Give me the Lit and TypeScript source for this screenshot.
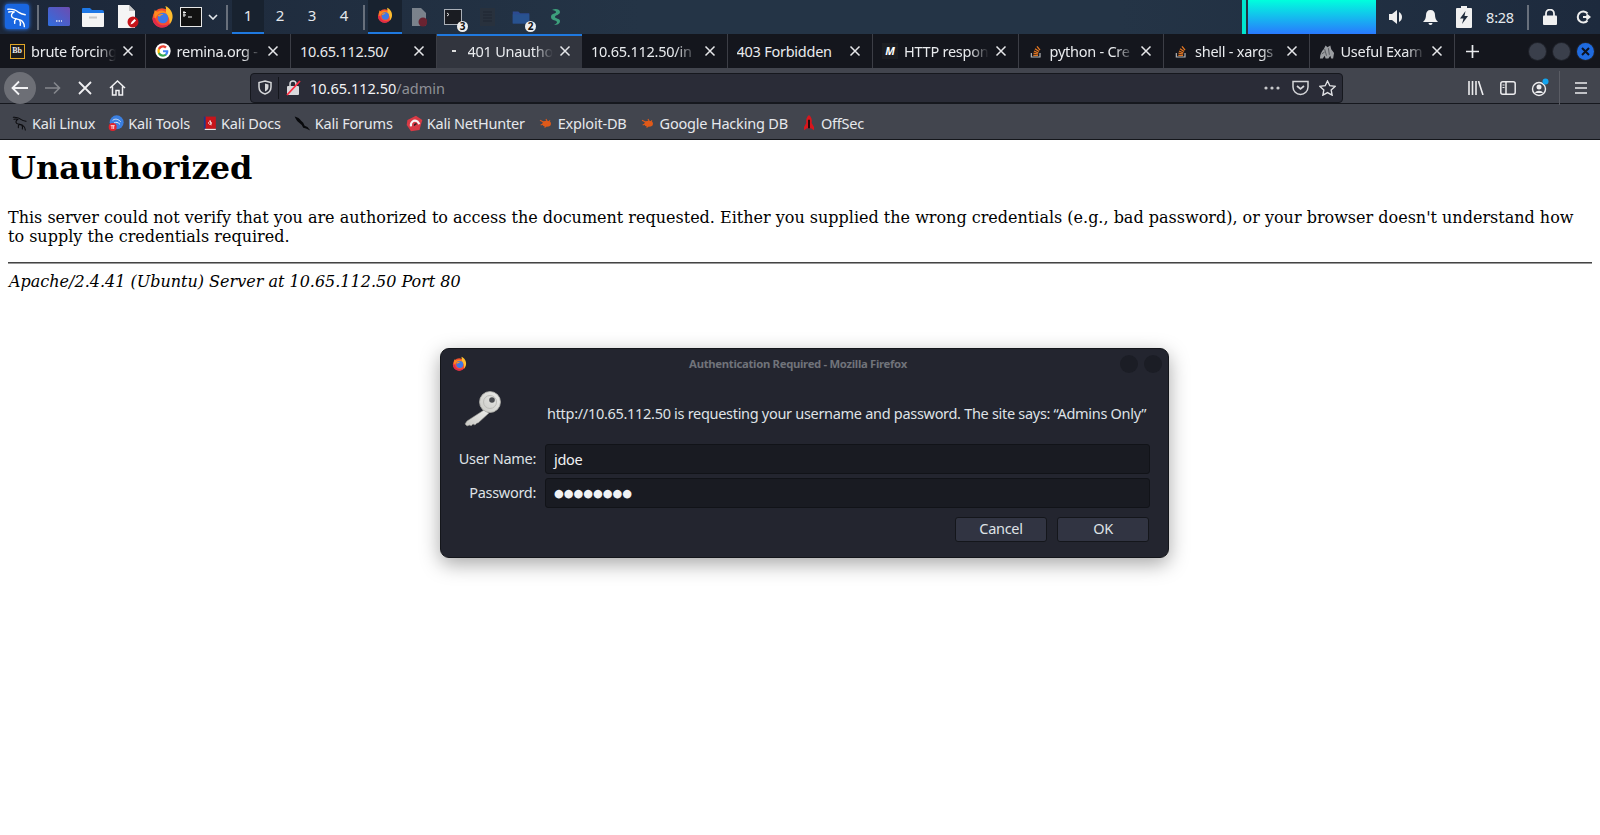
import { LitElement, html, css, svg } from "lit";
import { customElement } from "lit/decorators.js";

const icon = (size: number, body: unknown, box = 24) => html`<svg
  width=${size}
  height=${size}
  viewBox="0 0 ${box} ${box}"
>
  ${body}
</svg>`;

const firefox = (size: number) =>
  icon(
    size,
    svg`<circle cx="11.500" cy="13.500" r="10" fill="#f5502f"/>
    <path d="M15 1c5 2 8 7 7.500 12-.3 3-1.500 5.500-3.500 7.500 1-4 0-9-4-12 1-2 1-5 0-7.500z" fill="#ffbd2e"/>
    <path d="M4 5c1 1.500 2 2 3 2 1.500-1 3.500-1.500 5.500-1 2 .5 4 2 5 4-3-2-7-2-9.500-.5C6 11 5 13 4.500 15 3 12 3 8 4 5z" fill="#ff8a1f"/>
    <path d="M1.500 13.500c0 5.500 4.500 10 10 10 4 0 7.500-2 9-5.500-2 2.500-5 3.500-8.500 3-4-.5-7-3.500-7.500-7.500z" fill="#e02a4a"/>
    <circle cx="12.500" cy="13.500" r="5.500" fill="#3f78e8"/>
    <path d="M7 11c2-1.500 4-2 6-1.500-1 1-2 1.500-3 1.500 0 1-1.500 1.500-3 0z" fill="#ff9a1f"/>`
  );

const dragon = (size: number, color: string, w = 1.4) =>
  icon(
    size,
    svg`<g fill="none" stroke=${color} stroke-width=${w} stroke-linecap="round" stroke-linejoin="round">
      <path d="M2 3.500C7 3 11 4.500 14 7c2 1.500 4 2 7 2.500"/>
      <path d="M3 6.500c2-.5 4-.5 6 0-3 1.500-4 4-2 6 2 1.500 6 1.500 9 3 2.500 1.500 4 4 4 7"/>
      <path d="M11 14c-1.500 1.500-2 3-1.500 5"/>
      <path d="M15 16c1 1.500 1 3 .5 5"/>
    </g>`
  );

const google = icon(
  16,
  svg`<circle cx="12" cy="12" r="11.500" fill="#fff"/>
  <path d="M20 12.400c0-.6 0-1.200-.2-1.700H12v3.200h4.500c-.2 1-.8 1.900-1.700 2.500v2.100h2.700c1.600-1.500 2.500-3.600 2.500-6.100z" fill="#4285f4"/>
  <path d="M12 20.500c2.300 0 4.200-.8 5.500-2l-2.700-2.100c-.7.5-1.700.8-2.800.8-2.200 0-4-1.500-4.700-3.400H4.500v2.200c1.400 2.700 4.200 4.500 7.500 4.500z" fill="#34a853"/>
  <path d="M7.300 13.800c-.4-1.100-.4-2.400 0-3.600V8H4.500c-1.100 2.400-1.100 5.200 0 8z" fill="#fbbc05"/>
  <path d="M12 6.800c1.200 0 2.300.4 3.200 1.300l2.400-2.400C16.100 4.300 14.200 3.500 12 3.500 8.700 3.500 5.900 5.300 4.500 8l2.800 2.200C8 8.300 9.800 6.800 12 6.800z" fill="#ea4335"/>`
);

const stack = icon(
  18,
  svg`<path d="M5 15v6h13v-6" fill="none" stroke="#b3b5b8" stroke-width="1.800"/>
  <g stroke="#e87922" stroke-width="1.900" fill="none">
    <path d="M8 18.500h7"/><path d="M8.200 15.300l7 1.200"/><path d="M9 12l6.500 3"/><path d="M10.500 8.500l6 4.300"/><path d="M13.500 5l4.500 5.800"/>
  </g>`
);

const closeX = html`<svg class="x" width="12" height="12" viewBox="0 0 12 12">
  <path d="M1.500 1.500l9 9M10.500 1.500l-9 9" stroke="#e6e7ea" stroke-width="1.500" />
</svg>`;

const taskFolder = icon(
  22,
  svg`<path d="M3 6h6l2 2h10v11H3z" fill="#2c4a90"/><path d="M3 9h18v10H3z" fill="#28528f"/>`
);

@customElement("top-panel")
class TopPanel extends LitElement {
  static styles = css`
    :host {
      display: grid;
      grid-template-columns:
        34px 8px 34px 34px 36px 32px 26px 18px 10px 32px 32px 32px 32px 8px repeat(6, 34px)
        1fr 4px 2px 128px 4px 34px 33px 34px 42px 10px 33px 34px;
      height: 34px;
      background: linear-gradient(90deg, #1c2739, #243446 40%, #243446 70%, #1d2a3d);
      color: #e4e8ec;
      font: 15px "Noto Sans", sans-serif;
      letter-spacing: -0.25px;
    }
    .cell {
      display: flex;
      align-items: center;
      justify-content: center;
      position: relative;
      height: 33px;
    }
    .sep {
      display: flex;
      justify-content: center;
      padding-top: 5px;
    }
    .sep i {
      display: block;
      width: 2px;
      height: 25px;
      background: #68707c;
    }
    .logo {
      width: 24px;
      height: 25px;
      border-radius: 3px;
      background: #1966e0;
      box-shadow: 0 0 4px #2b7cff;
      display: flex;
      align-items: center;
      justify-content: center;
    }
    .ws {
      box-sizing: border-box;
      height: 34px;
      border-bottom: 2px solid transparent;
      padding-bottom: 2px;
    }
    .ws.on {
      background: #18222f;
      border-bottom-color: #1f79e0;
    }
    .badge {
      position: absolute;
      right: 2px;
      bottom: 1px;
      width: 11px;
      height: 11px;
      border-radius: 50%;
      background: #eee;
      color: #111;
      font: bold 10px/11px "Noto Sans", sans-serif;
      text-align: center;
    }
    .dim {
      opacity: 0.55;
    }
    .vis1 {
      background: #00e6cf;
    }
    .vis2 {
      background: linear-gradient(180deg, #00ffdd, #2979ff);
    }
    .time {
      font-size: 14.500px;
      padding-right: 4px;
      box-sizing: border-box;
    }
  `;

  render() {
    return html`
      <div class="cell">
        <div class="logo">${dragon(22, "#fff", 1.5)}</div>
      </div>
      <div class="sep"><i></i></div>
      <div class="cell">
        <svg width="22" height="19" viewBox="0 0 22 19">
          <defs>
            <linearGradient id="lg" x1="0" x2="1" y1="1" y2="0">
              <stop offset="0" stop-color="#2f6fe0" />
              <stop offset="1" stop-color="#6d4cb0" />
            </linearGradient>
          </defs>
          <rect width="22" height="19" rx="1.500" fill="url(#lg)" />
          <path d="M8 14h6" stroke="#dfe6f5" stroke-width="1.500" stroke-dasharray="1.500 1" />
        </svg>
      </div>
      <div class="cell">
        <svg width="22" height="20" viewBox="0 0 22 20">
          <path d="M0 2a1 1 0 011-1h7l2 2h10a2 2 0 012 2v3H0z" fill="#1e78e6" />
          <path d="M0 6h22v13a1 1 0 01-1 1H1a1 1 0 01-1-1z" fill="#f4f4f4" />
          <path d="M7 9.500h8v2H7z" fill="#c9c9c9" />
        </svg>
      </div>
      <div class="cell">
        <svg width="22" height="23" viewBox="0 0 22 23">
          <path d="M1 0h11l6 6v17H1z" fill="#f5f5f5" />
          <path d="M12 0l6 6h-6z" fill="#c8c8c8" />
          <circle cx="16" cy="17" r="5.500" fill="#c7141a" />
          <path d="M13.500 19.500l1-2.500 3-3 1.500 1.500-3 3z" fill="#fff" />
        </svg>
      </div>
      <div class="cell">${firefox(23)}</div>
      <div class="cell">
        <svg width="22" height="20" viewBox="0 0 22 20">
          <rect x=".5" y=".5" width="21" height="19" fill="#111" stroke="#e8e8e8" />
          <path d="M4 4v6M3 5.500h3M3 8h3M8 10h4" stroke="#eee" stroke-width="1" fill="none" />
        </svg>
      </div>
      <div class="cell">
        <svg width="10" height="6" viewBox="0 0 10 6">
          <path d="M1 1l4 4 4-4" stroke="#e4e8ec" stroke-width="1.600" fill="none" />
        </svg>
      </div>
      <div class="sep"><i></i></div>
      <div class="cell ws on">1</div>
      <div class="cell ws">2</div>
      <div class="cell ws">3</div>
      <div class="cell ws">4</div>
      <div class="sep"><i></i></div>
      <div class="cell ws on">${firefox(16)}</div>
      <div class="cell">
        <svg class="dim" width="16" height="20" viewBox="0 0 16 20">
          <path d="M1 1h9l5 5v13H1z" fill="#c4c6c9" />
          <circle cx="12" cy="15" r="4.500" fill="#a51a24" />
        </svg>
      </div>
      <div class="cell">
        <svg width="18" height="16" viewBox="0 0 18 16">
          <rect x=".5" y=".5" width="17" height="15" fill="#1a1c22" stroke="#aab0b8" />
          <path d="M3 4l2 1.500L3 7" stroke="#ddd" fill="none" />
        </svg>
        <span class="badge">3</span>
      </div>
      <div class="cell">
        <svg width="15" height="18" viewBox="0 0 15 18">
          <rect width="15" height="18" fill="#28313d" />
          <path d="M3 4h9M3 7h9M3 10h9M3 13h9" stroke="#1e2632" />
        </svg>
      </div>
      <div class="cell">${taskFolder}<span class="badge">2</span></div>
      <div class="cell">
        <svg width="14" height="18" viewBox="0 0 14 18">
          <path
            d="M4 2c3-2 8-1 8 2s-5 3-5 5 5 1 5 4-3 4-6 4c2-1 3-2 3-3 0-2-6-1-6-5s5-3 5-5c0-1-2-2-4-2z"
            fill="#3d9f7c"
          />
        </svg>
      </div>
      <div></div>
      <div class="vis1"></div>
      <div></div>
      <div class="vis2"></div>
      <div></div>
      <div class="cell">
        <svg width="16" height="16" viewBox="0 0 16 16">
          <path d="M0 5h3l5-4v14l-5-4H0z" fill="#eee" />
          <path d="M10 3c4 2 4 8 0 10z" fill="#eee" />
        </svg>
      </div>
      <div class="cell">
        <svg width="15" height="16" viewBox="0 0 15 16">
          <path d="M7.500 1c3 0 4.500 2 4.500 5s1 5 3 7H0c2-2 3-4 3-7s1.500-5 4.500-5z" fill="#f2f2f2" />
          <path d="M5.500 14h4a2 2 0 01-4 0z" fill="#f2f2f2" />
        </svg>
      </div>
      <div class="cell">
        <svg width="16" height="22" viewBox="0 0 16 22">
          <path d="M5 0h6v2h4a1 1 0 011 1v18a1 1 0 01-1 1H1a1 1 0 01-1-1V3a1 1 0 011-1h4z" fill="#f0f0f0" />
          <path d="M9.500 5L4 12.500h3.500L6 18l6-8H8.500z" fill="#1e2a3a" />
        </svg>
      </div>
      <div class="cell time">8:28</div>
      <div class="sep"><i></i></div>
      <div class="cell">
        <svg width="14" height="16" viewBox="0 0 14 16">
          <path d="M3 7V4.500a4 4 0 018 0V7" fill="none" stroke="#f0f0f0" stroke-width="1.800" />
          <rect y="6.500" width="14" height="9.500" rx="1" fill="#f0f0f0" />
        </svg>
      </div>
      <div class="cell">
        <svg width="15" height="14" viewBox="0 0 15 14">
          <path d="M11.500 3.500A5.500 5.500 0 1011.500 10.500" fill="none" stroke="#eee" stroke-width="2" />
          <path d="M7 7h6.500M10.500 4.500L13.500 7l-3 2.500" fill="none" stroke="#eee" stroke-width="2" />
        </svg>
      </div>
    `;
  }
}

@customElement("tab-strip")
class TabStrip extends LitElement {
  static styles = css`
    :host {
      display: flex;
      height: 34px;
      background: #14161d;
      color: #e9ebee;
      font: 14.500px "Noto Sans", sans-serif;
      letter-spacing: -0.25px;
      box-sizing: border-box;
    }
    .tab {
      width: 145.500px;
      flex: none;
      box-sizing: border-box;
      display: flex;
      align-items: center;
      gap: 6px;
      padding: 0 11px 0 9px;
      border-right: 1px solid #3c3e46;
    }
    .tab.on {
      background: #32353e;
      border-top: 2px solid #1f79e0;
      border-right: none;
      padding-bottom: 2px;
    }
    .title {
      flex: 1;
      min-width: 0;
      overflow: hidden;
      white-space: nowrap;
      padding-bottom: 1px;
      -webkit-mask-image: linear-gradient(90deg, #000 78%, transparent);
      mask-image: linear-gradient(90deg, #000 78%, transparent);
    }
    .title.full {
      -webkit-mask-image: none;
      mask-image: none;
    }
    .fav {
      width: 16px;
      height: 16px;
      flex: none;
      display: flex;
      align-items: center;
      justify-content: center;
    }
    .bb {
      box-sizing: border-box;
      width: 15px;
      height: 15px;
      border: 1.500px solid #e0a526;
      background: #1a1a1a;
      color: #eee;
      font: bold 8px/12px "Liberation Serif", serif;
      text-align: center;
    }
    .mm {
      background: #1c1e22;
      color: #fff;
      font: italic bold 11px/16px "Noto Sans", sans-serif;
      text-align: center;
    }
    .dot {
      width: 4px;
      height: 2px;
      background: #ddd;
    }
    .x {
      flex: none;
    }
    .plus {
      width: 34px;
      display: flex;
      align-items: center;
      justify-content: center;
    }
    .spacer {
      flex: 1;
    }
    .wins {
      display: flex;
      align-items: center;
      gap: 7px;
      padding-right: 6px;
    }
    .win {
      width: 17px;
      height: 17px;
      border-radius: 50%;
      background: #3a3f4b;
      box-shadow: 0 0 0 1px #20232b;
      display: flex;
      align-items: center;
      justify-content: center;
    }
    .win.close {
      background: #1f6be0;
    }
  `;

  render() {
    const tab = (fav: unknown, title: string, on = false, full = false) => html`
      <div class="tab ${on ? "on" : ""}">
        ${fav ? html`<div class="fav">${fav}</div>` : ""}
        <div class="title ${full ? "full" : ""}">${title}</div>
        ${closeX}
      </div>
    `;
    return html`
      ${tab(html`<div class="bb">Bb</div>`, "brute forcing")}
      ${tab(google, "remina.org -")}
      ${tab(null, "10.65.112.50/", false, true)}
      ${tab(html`<div class="dot"></div>`, "401 Unautho", true)}
      ${tab(null, "10.65.112.50/in")}
      ${tab(null, "403 Forbidden", false, true)}
      ${tab(html`<div class="fav mm">M</div>`, "HTTP respon")}
      ${tab(stack, "python - Cre")}
      ${tab(stack, "shell - xargs")}
      ${tab(
        html`<svg width="17" height="17" viewBox="0 0 17 17">
          <path d="M1 16c0-5 2-8 4-10l2-4 2 2 3-2 1 4 3 4-1 6h-2l-1-3-2 3H7l-1-3-2 3z" fill="#9a9da1" />
          <path d="M6 6l2 7M10 5l1 7M3 11l3-2" stroke="#55585c" />
        </svg>`,
        "Useful Exam"
      )}
      <div class="plus">
        <svg width="15" height="15" viewBox="0 0 15 15">
          <path d="M7.500 1v13M1 7.500h13" stroke="#e9ebee" stroke-width="1.700" />
        </svg>
      </div>
      <div class="spacer"></div>
      <div class="wins">
        <div class="win"></div>
        <div class="win"></div>
        <div class="win close">
          <svg width="9" height="9" viewBox="0 0 9 9">
            <path d="M1 1l7 7M8 1l-7 7" stroke="#0c1220" stroke-width="2" />
          </svg>
        </div>
      </div>
    `;
  }
}

@customElement("nav-bar")
class NavBar extends LitElement {
  static styles = css`
    :host {
      display: flex;
      align-items: center;
      height: 36px;
      background: #42454e;
      border-bottom: 1px solid #16181e;
      box-sizing: border-box;
      padding: 4px 0 0 4px;
      color: #f0f0f2;
    }
    .btn {
      width: 32px;
      height: 32px;
      flex: none;
      display: flex;
      align-items: center;
      justify-content: center;
    }
    .back {
      border-radius: 50%;
      background: #6d6f76;
      margin-right: 1px;
    }
    .nav-group {
      display: grid;
      grid-template-columns: 32px 32px 32px;
      margin-right: 117px;
    }
    .url {
      width: 1093px;
      height: 30px;
      flex: none;
      box-sizing: border-box;
      background: #2a2c37;
      border: 1px solid #16181e;
      border-radius: 4px;
      display: flex;
      align-items: center;
      padding: 0 6px 0 7px;
      font: 14.500px "Noto Sans", sans-serif;
    }
    .divider {
      width: 1px;
      height: 22px;
      background: #14161c;
      margin: 0 7px 0 6px;
    }
    .host {
      color: #f3f4f6;
      margin-left: 9px;
    }
    .path {
      color: #8e9096;
      flex: 1;
    }
    .right-icons {
      display: flex;
      align-items: center;
      gap: 10px;
    }
    .tools {
      display: flex;
      align-items: center;
      margin-left: auto;
      height: 34px;
      padding-right: 3px;
    }
    .vsep {
      width: 1px;
      height: 34px;
      background: #5a5c64;
      margin: 0 5px 0 3px;
    }
  `;

  render() {
    return html`
      <div class="btn back">
        <svg width="18" height="16" viewBox="0 0 18 16">
          <path d="M17 8H2M8 1.500L1.500 8 8 14.500" fill="none" stroke="#f2f2f4" stroke-width="1.800" />
        </svg>
      </div>
      <div class="nav-group">
        <div class="btn">
          <svg width="16" height="14" viewBox="0 0 16 14">
            <path d="M0 7h14M9 1.500L14.500 7 9 12.500" fill="none" stroke="#85878d" stroke-width="1.600" />
          </svg>
        </div>
        <div class="btn">
          <svg width="14" height="14" viewBox="0 0 14 14">
            <path d="M1 1l12 12M13 1L1 13" stroke="#f0f0f2" stroke-width="1.800" />
          </svg>
        </div>
        <div class="btn">
          <svg width="17" height="16" viewBox="0 0 17 16">
            <path
              d="M1 8l7.500-7L16 8M3.500 6.500V15h3.500v-4.500h3V15h3.500V6.500"
              fill="none"
              stroke="#f0f0f2"
              stroke-width="1.500"
            />
          </svg>
        </div>
      </div>
      <div class="url">
        <svg width="14" height="15" viewBox="0 0 14 15">
          <path
            d="M7 1l6 1.500V7c0 3.500-2.500 6-6 7-3.500-1-6-3.500-6-7V2.500z"
            fill="none"
            stroke="#d5d6d9"
            stroke-width="1.500"
          />
          <path d="M7 3.500l3.500 1V7c0 2-1.500 3.500-3.500 4.500z" fill="#d5d6d9" />
        </svg>
        <div class="divider"></div>
        <svg width="15" height="16" viewBox="0 0 15 16">
          <rect x="1" y="6" width="12" height="9" rx="1" fill="#d9d9dc" />
          <path d="M4 6V4a3 3 0 016 0v2" fill="none" stroke="#d9d9dc" stroke-width="1.500" />
          <path d="M1 15L14 1" stroke="#ff2a3f" stroke-width="1.800" />
        </svg>
        <span class="host">10.65.112.50</span><span class="path">/admin</span>
        <div class="right-icons">
          <svg width="20" height="16" viewBox="0 0 20 16">
            <circle cx="4" cy="8" r="1.600" fill="#c8c9cc" />
            <circle cx="10" cy="8" r="1.600" fill="#c8c9cc" />
            <circle cx="16" cy="8" r="1.600" fill="#c8c9cc" />
          </svg>
          <svg width="17" height="16" viewBox="0 0 17 16">
            <path d="M1 1.500h15V7a7.500 7.500 0 01-15 0z" fill="none" stroke="#d5d6d9" stroke-width="1.500" />
            <path d="M5 6l3.500 3L12 6" fill="none" stroke="#d5d6d9" stroke-width="1.700" />
          </svg>
          <svg width="17" height="16" viewBox="0 0 17 16">
            <path
              d="M8.500 1l2.300 4.700 5.200.7-3.800 3.600.9 5.100-4.600-2.500-4.600 2.500.9-5.100L1 6.400l5.200-.7z"
              fill="none"
              stroke="#e0e1e4"
              stroke-width="1.400"
            />
          </svg>
        </div>
      </div>
      <div class="tools">
        <div class="btn">
          <svg width="16" height="14" viewBox="0 0 16 14">
            <path d="M1 0v14M4.500 0v14M8 0v14M10.500 0l4.500 14" stroke="#ececee" stroke-width="1.600" fill="none" />
          </svg>
        </div>
        <div class="btn">
          <svg width="16" height="14" viewBox="0 0 16 14">
            <rect x=".8" y=".8" width="14.400" height="12.400" rx="2" fill="none" stroke="#ececee" stroke-width="1.500" />
            <path d="M6 1v12" stroke="#ececee" stroke-width="1.500" />
            <path d="M2.500 4h2M2.500 6.500h2" stroke="#ececee" />
          </svg>
        </div>
        <div class="btn">
          <svg width="20" height="20" viewBox="0 0 20 20">
            <circle cx="9" cy="11" r="6.500" fill="none" stroke="#ececee" stroke-width="1.400" />
            <circle cx="9" cy="9" r="2.500" fill="#ececee" />
            <path d="M5 15c1-3 7-3 8 0" fill="#ececee" />
            <circle cx="15.500" cy="3.500" r="3" fill="#12a5f0" />
          </svg>
        </div>
        <div class="vsep"></div>
        <div class="btn">
          <svg width="14" height="12" viewBox="0 0 14 12">
            <path d="M1 1h12M1 6h12M1 11h12" stroke="#ececee" stroke-width="1.700" />
          </svg>
        </div>
      </div>
    `;
  }
}

@customElement("bookmark-bar")
class BookmarkBar extends LitElement {
  static styles = css`
    :host {
      display: flex;
      align-items: center;
      height: 36px;
      padding: 3px 0 0 12px;
      gap: 13px;
      background: #42454e;
      border-bottom: 1px solid #14161b;
      box-sizing: border-box;
      color: #e6e8ec;
      font: 14.500px "Noto Sans", sans-serif;
      letter-spacing: -0.2px;
    }
    .item {
      display: flex;
      align-items: center;
      gap: 4px;
      white-space: nowrap;
    }
    svg {
      flex: none;
    }
  `;

  render() {
    const item = (ic: unknown, label: string) =>
      html`<div class="item">${ic}<span>${label}</span></div>`;
    const bug = icon(
      16,
      svg`<ellipse cx="13" cy="13" rx="6.500" ry="4.500" fill="#e05a1a"/>
      <path d="M3 8l6 3M4 15l5-2M10 19l2-3M12 6l2 4M18 8l-2 3" stroke="#e05a1a" stroke-width="1.600"/>`
    );
    return html`
      ${item(dragon(16, "#0b0b0e", 1.600), "Kali Linux")}
      ${item(
        icon(
          16,
          svg`<circle cx="13" cy="11" r="10.500" fill="#3b7fe0"/>
          <path d="M7 8c4-3 8-2 12 2M9 12c3-2 6-1 9 2" stroke="#dbe8fa" stroke-width="1.500" fill="none"/>
          <circle cx="7" cy="18" r="6" fill="#e0242e"/>
          <path d="M4 16h6M6 16v5M8.500 16v5" stroke="#fff" stroke-width="1.200"/>`
        ),
        "Kali Tools"
      )}
      ${item(
        icon(
          14,
          svg`<rect x="3" y="1" width="19" height="21" fill="#c8151b"/>
          <path d="M3 1v21" stroke="#19388a" stroke-width="3"/>
          <path d="M3 22h19v2H3z" fill="#e8e8e8"/>
          <path d="M9 12l3-3 3 3-3 3zM12 7l2 9" stroke="#fff" stroke-width="1.300" fill="none"/>`
        ),
        "Kali Docs"
      )}
      ${item(
        icon(
          17,
          svg`<path d="M1 2c4 1 7 3 9 6l3 3 2 4 4 2 4 5-6-3-4-1-2-4-5-4C4 8 2 5 1 2z" fill="#08090c"/>`
        ),
        "Kali Forums"
      )}
      ${item(
        icon(
          17,
          svg`<path d="M2 7l12-6 9 6-4 14-12 2-6-9z" fill="#d83a45"/>
          <path d="M7 16C6 10 11 6 16 9l3 4" fill="none" stroke="#f4f4f4" stroke-width="3"/>
          <path d="M12 15c0-2 2-3 3-2" fill="none" stroke="#222" stroke-width="2"/>`
        ),
        "Kali NetHunter"
      )}
      ${item(bug, "Exploit-DB")} ${item(bug, "Google Hacking DB")}
      ${item(
        icon(
          16,
          svg`<path d="M12 0c3.500 3 5 7 4 12l3.500 6v5l-4.500-3h-6l-4.500 3v-5L8 12C7 7 8.500 3 12 0z" fill="#d9151c"/>
          <path d="M12 7v13" stroke="#2a0a0a" stroke-width="3"/>`
        ),
        "OffSec"
      )}
    `;
  }
}

@customElement("auth-dialog")
class AuthDialog extends LitElement {
  static styles = css`
    :host {
      position: absolute;
      left: 440px;
      top: 348px;
      width: 729px;
      height: 210px;
      box-sizing: border-box;
      display: block;
      border: 1px solid #14161b;
      border-radius: 9px;
      background: #23252f;
      box-shadow: 0 6px 20px rgba(0, 0, 0, 0.35);
      color: #dfe2e6;
      font: 14.500px "Noto Sans", sans-serif;
      letter-spacing: -0.3px;
    }
    .titlebar {
      display: grid;
      grid-template-columns: 42px 1fr 60px;
      align-items: center;
      height: 33px;
      box-sizing: border-box;
      padding: 0 6px 4px 11px;
    }
    .title {
      text-align: center;
      font-size: 11.300px;
      font-weight: 700;
      color: #70737a;
    }
    .winbtns {
      display: flex;
      gap: 6px;
      justify-content: flex-end;
    }
    .winbtns i {
      display: block;
      width: 18px;
      height: 18px;
      border-radius: 50%;
      background: #1b1d25;
    }
    .head {
      display: flex;
      align-items: center;
      height: 62px;
      padding-left: 22px;
      gap: 46px;
      white-space: nowrap;
    }
    .head svg {
      margin-bottom: 9px;
      flex: none;
    }
    .form {
      display: grid;
      grid-template-columns: 86px 1fr;
      gap: 4px 9px;
      padding: 0 18px 0 9px;
    }
    .label {
      text-align: right;
      align-self: center;
      padding-bottom: 2px;
    }
    .field {
      height: 30px;
      box-sizing: border-box;
      background: #191b22;
      border: 1px solid #111318;
      border-radius: 3px;
      padding: 0 8px;
      display: flex;
      align-items: center;
      color: #f1f2f4;
    }
    .dots {
      font: 11.200px "DejaVu Sans", sans-serif;
      letter-spacing: 0;
    }
    .actions {
      display: flex;
      justify-content: flex-end;
      gap: 10px;
      padding: 9px 19px 0 0;
    }
    .button {
      width: 92px;
      height: 25px;
      box-sizing: border-box;
      background: #313442;
      border: 1px solid #14161b;
      border-radius: 3px;
      padding-bottom: 3px;
      display: flex;
      align-items: center;
      justify-content: center;
    }
  `;

  render() {
    return html`
      <div class="titlebar">
        ${firefox(15)}
        <div class="title">Authentication Required - Mozilla Firefox</div>
        <div class="winbtns"><i></i><i></i></div>
      </div>
      <div class="head">
        <svg width="38" height="36" viewBox="0 0 38 36">
          <defs>
            <linearGradient id="key" x1="0" x2="1" y1="1" y2="0">
              <stop offset="0" stop-color="#c9c9c4" />
              <stop offset="1" stop-color="#ececea" />
            </linearGradient>
          </defs>
          <path
            d="M21 19L4 30l-2 3 2 2 3-1 1 1 2-2 2 1 2-2 1 0 11-10z"
            fill="url(#key)"
            stroke="#8e8e8a"
            stroke-width=".6"
          />
          <circle cx="27" cy="11" r="10.500" fill="url(#key)" stroke="#a9a9a5" stroke-width=".8" />
          <circle cx="27" cy="11" r="6.500" fill="none" stroke="#bcbcb8" stroke-width="1" />
          <circle cx="29" cy="9" r="2.800" fill="#4a4c50" />
        </svg>
        <div>http://10.65.112.50 is requesting your username and password. The site says: “Admins Only”</div>
      </div>
      <div class="form">
        <div class="label">User Name:</div>
        <div class="field">jdoe</div>
        <div class="label">Password:</div>
        <div class="field dots">●●●●●●●●</div>
      </div>
      <div class="actions">
        <div class="button">Cancel</div>
        <div class="button">OK</div>
      </div>
    `;
  }
}

@customElement("app-root")
export class AppRoot extends LitElement {
  static styles = css`
    :host {
      display: block;
      position: relative;
      width: 1600px;
      height: 835px;
      overflow: hidden;
      background: #fff;
    }
    .page {
      padding: 0 8px;
      font: 16px "DejaVu Serif", serif;
      color: #000;
    }
    h1 {
      font-size: 32px;
      margin: 9px 0 21.440px;
    }
    p {
      margin: 16px 0;
    }
    hr {
      margin: 8px 0;
      border: none;
      border-top: 1px solid #444;
      border-bottom: 1px solid #999;
    }
    address {
      font-style: italic;
      padding-left: 1px;
    }
  `;

  render() {
    return html`
      <top-panel></top-panel>
      <tab-strip></tab-strip>
      <nav-bar></nav-bar>
      <bookmark-bar></bookmark-bar>
      <div class="page">
        <h1>Unauthorized</h1>
        <p>
          This server could not verify that you are authorized to access the document requested. Either you
          supplied the wrong credentials (e.g., bad password), or your browser doesn't understand how to supply
          the credentials required.
        </p>
        <hr />
        <address>Apache/2.4.41 (Ubuntu) Server at 10.65.112.50 Port 80</address>
      </div>
      <auth-dialog></auth-dialog>
    `;
  }
}
